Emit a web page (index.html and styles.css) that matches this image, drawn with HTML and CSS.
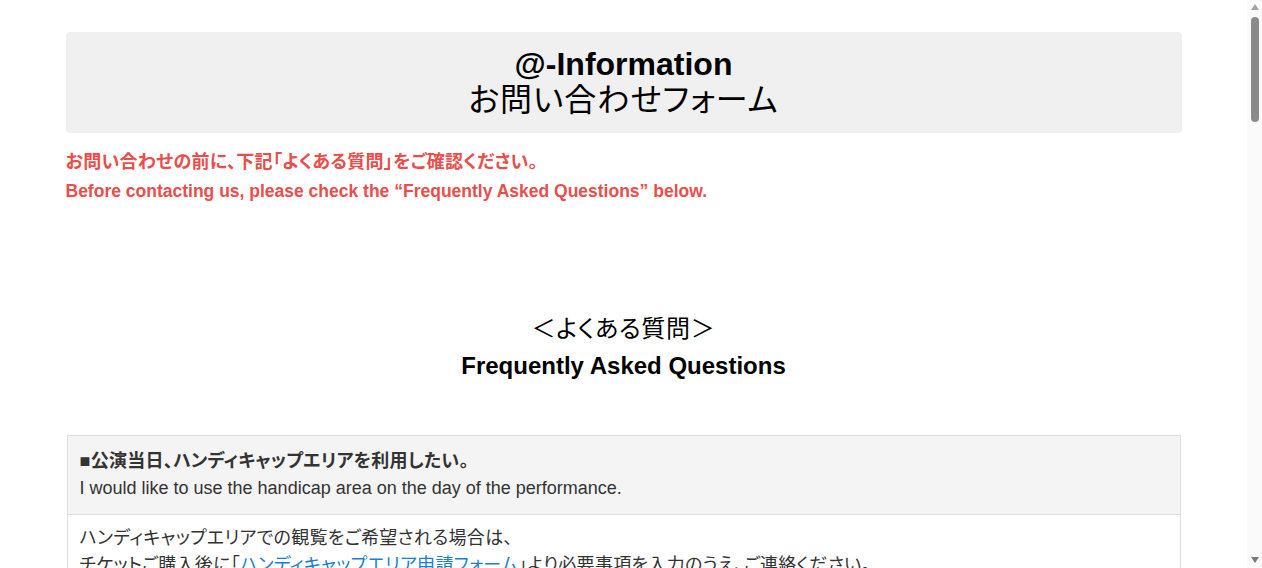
FILE: index.html
```html
<!DOCTYPE html>
<html lang="ja">
	<head>
		<meta charset="UTF-8" />
		<meta name="viewport" content="width=device-width, initial-scale=1.0" />
		<title>@-Information お問い合わせフォーム</title>
		<link rel="stylesheet" href="styles.css">
	</head>
	<body>

		<div class="wrap">
			<header class="pageHead">
				<h1>@-Information<br><span>お問い合わせフォーム</span></h1>
			</header>

			<div class="notice">
				<p class="noticeJa">お問い合わせの前に、下記「よくある質問」をご確認ください。</p>
				<p class="noticeEn">Before contacting us, please check the “Frequently Asked Questions” below.</p>
			</div>

			<section class="faq">
				<h2>
					<span class="faqJa">＜よくある質問＞</span>
					<span class="faqEn">Frequently Asked Questions</span>
				</h2>

				<div class="faqItem">
					<div class="question">
						<p class="ja">■公演当日、ハンディキャップエリアを利用したい。</p>
						<p>I would like to use the handicap area on the day of the performance.</p>
					</div>
					<div class="answer">
						<p class="ja">ハンディキャップエリアでの観覧をご希望される場合は、<br>
						チケットご購入後に「<a href="#">ハンディキャップエリア申請フォーム</a>」より必要事項を入力のうえ、ご連絡ください。</p>
						<p>If you wish to watch from the handicap area, please fill in the required information on the application form after purchasing your ticket.</p>
					</div>
				</div>

				<div class="faqItem">
					<div class="question">
						<p class="ja">■チケットの払い戻しはできますか？</p>
						<p>Can I get a refund for my ticket?</p>
					</div>
					<div class="answer">
						<p class="ja">公演中止の場合を除き、ご購入後のチケットの払い戻しはいたしかねます。</p>
						<p>Tickets cannot be refunded after purchase, except when the performance is cancelled.</p>
					</div>
				</div>

				<div class="faqItem">
					<div class="question">
						<p class="ja">■再入場はできますか？</p>
						<p>Can I re-enter the venue?</p>
					</div>
					<div class="answer">
						<p class="ja">原則として再入場はできません。あらかじめご了承ください。</p>
						<p>As a rule, re-entry is not permitted.</p>
					</div>
				</div>

				<div class="faqItem">
					<div class="question">
						<p class="ja">■未就学児は入場できますか？</p>
						<p>Can preschool children enter?</p>
					</div>
					<div class="answer">
						<p class="ja">公演ごとに異なります。各公演の詳細ページをご確認ください。</p>
						<p>This differs for each performance. Please check the details page of each show.</p>
					</div>
				</div>
			</section>
		</div>

		<!-- page scroll rail -->
		<div class="rail" aria-hidden="true">
			<span class="railUp"></span>
			<span class="railThumb"></span>
			<span class="railDown"></span>
		</div>

	</body>
</html>
```

FILE: styles.css
```css
* {
	box-sizing: border-box;
	margin: 0;
	padding: 0;
}

body {
	background: #fff;
	color: #333;
	font-family: "Liberation Sans", Arial, "Noto Sans CJK JP", sans-serif;
	font-feature-settings: "palt";
	padding-right: 15px;
}

.wrap {
	max-width: 1116px;
	margin: 0 auto;
	padding: 32px 0 80px;
}

.pageHead {
	background: #f0f0f0;
	border-radius: 4px;
	padding: 14px 0 15px;
	text-align: center;
}

.pageHead h1 {
	font-size: 32px;
	line-height: 36px;
	color: #000;
}

.pageHead h1 span {
	font-weight: normal;
	letter-spacing: 1px;
}

.notice {
	margin-top: 16px;
	color: #eb4d4b;
	font-weight: bold;
}

.noticeJa {
	font-size: 18px;
	letter-spacing: 0.3px;
	line-height: 27px;
}

.noticeEn {
	font-size: 17.5px;
	line-height: 30px;
}

.faq {
	margin-top: 105px;
}

.faq h2 {
	text-align: center;
	color: #000;
	margin-bottom: 50px;
}

.faq h2 span {
	display: block;
}

.faqJa {
	font-size: 24px;
	font-weight: normal;
	letter-spacing: 0.75px;
	line-height: 36px;
}

.faqEn {
	font-size: 24px;
	line-height: 38px;
}

.faqItem {
	border: 1px solid #ddd;
	margin: 0 1px 30px;
}

.question {
	background: #f4f4f4;
	padding: 12px;
	border-bottom: 1px solid #ddd;
	font-size: 18px;
	line-height: 27px;
}

.question .ja {
	font-weight: bold;
}

.ja {
	letter-spacing: 0.3px;
}

.answer {
	padding: 10px 12px 12px;
	font-size: 18px;
	line-height: 27px;
}

.answer p + p {
	margin-top: 8px;
}

.answer a {
	color: #1a7fd4;
	text-decoration: none;
}

/* scroll rail on the right edge */
.rail {
	position: fixed;
	top: 0;
	right: 0;
	bottom: 0;
	width: 15px;
	background: #fafafa;
	display: flex;
	flex-direction: column;
	align-items: center;
	padding: 4px 0 5px;
}

.railUp,
.railDown {
	width: 0;
	height: 0;
	border-left: 4px solid transparent;
	border-right: 4px solid transparent;
}

.railUp {
	border-bottom: 6px solid #a3a3a3;
}

.railDown {
	margin-top: auto;
	border-top: 6px solid #7a7a7a;
}

.railThumb {
	width: 8px;
	height: 105px;
	margin-top: 7px;
	border-radius: 4px;
	background: #8a8a8a;
}
```
